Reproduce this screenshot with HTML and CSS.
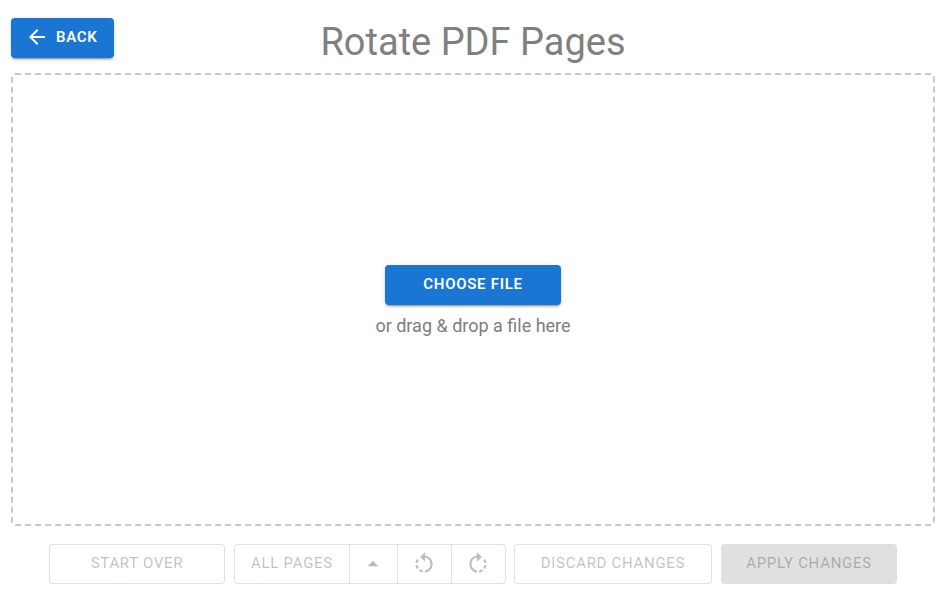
FILE: index.html
```html
<!DOCTYPE html>
<html lang="en">
<head>
<meta charset="utf-8">
<title>Rotate PDF Pages</title>
<link rel="stylesheet" href="styles.css">
</head>
<body>
<main class="app">
  <header class="header">
    <button class="btn btn-primary btn-back" type="button">
      <svg class="icon-back" viewBox="0 0 24 24" aria-hidden="true"><path d="M20 11H7.83l5.59-5.59L12 4l-8 8 8 8 1.41-1.41L7.83 13H20v-2z"/></svg>
      <span>Back</span>
    </button>
    <h1 class="title">Rotate PDF Pages</h1>
  </header>
  <section class="dropzone">
    <button class="btn btn-primary btn-choose" type="button">Choose file</button>
    <p class="hint">or drag &amp; drop a file here</p>
  </section>
  <footer class="toolbar">
    <button class="btn btn-outlined btn-start" type="button" disabled>Start over</button>
    <div class="group">
      <button class="seg seg-pages" type="button" disabled>All pages</button>
      <button class="seg seg-arrow" type="button" disabled aria-label="Select pages">
        <svg class="icon" viewBox="0 0 24 24" aria-hidden="true"><path d="M7 14l5-5 5 5z"/></svg>
      </button>
      <button class="seg seg-rot" type="button" disabled aria-label="Rotate left">
        <svg class="icon" viewBox="0 0 24 24" aria-hidden="true"><path d="M7.11 8.53 5.7 7.11C4.8 8.27 4.24 9.61 4.07 11h2.02c.14-.87.49-1.72 1.02-2.47zM6.09 13H4.07c.17 1.39.72 2.73 1.62 3.89l1.41-1.42c-.52-.75-.87-1.59-1.01-2.47zm1.01 5.32c1.16.9 2.51 1.44 3.9 1.61V17.9c-.87-.15-1.71-.49-2.46-1.03L7.1 18.32zM13 4.07V1L8.45 5.55 13 10V6.09c2.84.48 5 2.94 5 5.91s-2.16 5.43-5 5.91v2.02c3.95-.49 7-3.85 7-7.93s-3.05-7.44-7-7.93z"/></svg>
      </button>
      <button class="seg seg-rot" type="button" disabled aria-label="Rotate right">
        <svg class="icon" viewBox="0 0 24 24" aria-hidden="true"><path d="M15.55 5.55 11 1v3.07C7.06 4.56 4 7.92 4 12s3.05 7.44 7 7.93v-2.02c-2.84-.48-5-2.94-5-5.91s2.16-5.43 5-5.91V10l4.55-4.45zM19.93 11c-.17-1.39-.72-2.73-1.62-3.89l-1.42 1.42c.54.75.88 1.6 1.02 2.47h2.02zM13 17.9v2.02c1.39-.17 2.74-.71 3.9-1.61l-1.44-1.44c-.75.54-1.59.89-2.46 1.03zm3.89-2.42 1.42 1.41c.9-1.16 1.45-2.5 1.62-3.89h-2.02c-.14.87-.48 1.72-1.02 2.48z"/></svg>
      </button>
    </div>
    <button class="btn btn-outlined btn-discard" type="button" disabled>Discard changes</button>
    <button class="btn btn-filled-off btn-apply" type="button" disabled>Apply changes</button>
  </footer>
</main>
</body>
</html>
```
FILE: styles.css
```css
* {
  box-sizing: border-box;
}

html,
body {
  margin: 0;
  height: 100%;
  background: #fff;
}

body {
  font-family: Roboto, "Liberation Sans", sans-serif;
}

.app {
  display: flex;
  flex-direction: column;
  width: 945px;
  height: 600px;
  padding: 18px 10px 0 11px;
  overflow: hidden;
}

.header {
  display: grid;
  grid-template-columns: 1fr auto 1fr;
  height: 55px;
}

.title {
  grid-column: 2;
  grid-row: 1;
  margin: 1px 0 0;
  font-size: 38px;
  font-weight: 400;
  line-height: 46px;
  color: #808080;
  white-space: nowrap;
}

.btn {
  display: inline-flex;
  align-items: center;
  justify-content: center;
  height: 40px;
  padding: 0 0 2px;
  border: 0;
  border-radius: 4px;
  font-family: inherit;
  font-size: 15px;
  font-weight: 500;
  letter-spacing: 0.7px;
  text-transform: uppercase;
  white-space: nowrap;
}

.btn-primary {
  background: #1976d2;
  color: #fff;
  box-shadow: 0 3px 1px -2px rgba(0, 0, 0, 0.2), 0 2px 2px 0 rgba(0, 0, 0, 0.14), 0 1px 5px 0 rgba(0, 0, 0, 0.12);
  font-weight: 600;
}

.btn-back {
  grid-column: 1;
  grid-row: 1;
  justify-self: start;
  justify-content: flex-start;
  width: 103px;
  padding-left: 14px;
  gap: 7px;
}

.icon-back {
  width: 24px;
  height: 24px;
  fill: #fff;
}

.dropzone {
  display: flex;
  flex-direction: column;
  align-items: center;
  justify-content: center;
  height: 453px;
  padding-top: 2px;
  border: 2px dashed #c8c8c8;
  border-radius: 4px;
}

.btn-choose {
  width: 176px;
  flex: none;
}

.hint {
  margin: 10px 0 0;
  font-size: 18px;
  line-height: 22px;
  color: #7d7d7d;
}

.toolbar {
  display: flex;
  justify-content: flex-start;
  margin: 18px 0 0 38px;
}

.btn-outlined {
  background: #fff;
  border: 1px solid rgba(0, 0, 0, 0.12);
  color: rgba(0, 0, 0, 0.26);
  font-weight: 400;
}

.btn-filled-off {
  background: rgba(0, 0, 0, 0.12);
  color: rgba(0, 0, 0, 0.26);
  font-weight: 400;
}

.btn-start {
  width: 176px;
}

.group {
  display: flex;
  width: 272px;
  height: 40px;
  margin: 0 8px 0 9px;
  border: 1px solid rgba(0, 0, 0, 0.12);
  border-radius: 4px;
}

.seg {
  display: flex;
  align-items: center;
  justify-content: center;
  height: 100%;
  padding: 0 2px 0 0;
  border: 0;
  border-left: 1px solid rgba(0, 0, 0, 0.12);
  background: transparent;
  color: rgba(0, 0, 0, 0.26);
  font-family: inherit;
  font-size: 15px;
  letter-spacing: 0.7px;
  text-transform: uppercase;
}

.seg-pages {
  width: 114px;
  padding: 0 0 2px;
  border-left: 0;
}

.seg-arrow {
  width: 48px;
}

.seg-rot {
  width: 54px;
}

.icon {
  flex: none;
  width: 26px;
  height: 26px;
  fill: rgba(0, 0, 0, 0.26);
}

.btn-discard {
  width: 198px;
}

.btn-apply {
  width: 176px;
  margin-left: 9px;
}
```
